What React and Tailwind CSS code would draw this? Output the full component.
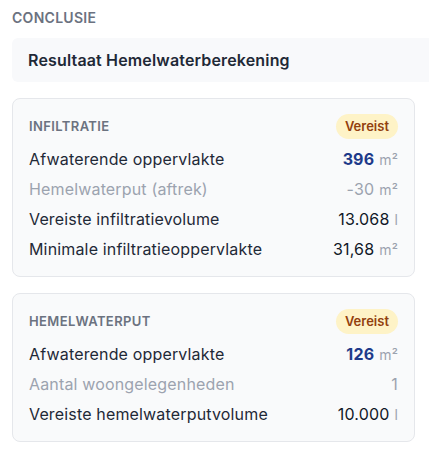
import React from "react";

function Badge() {
  return (
    <span className="inline-flex h-[25px] items-center rounded-full bg-[#fef3c7] px-[9px] text-[13px] font-semibold text-[#92400e]">
      Vereist
    </span>
  );
}

function Row({ label, value, unit, muted, strong }) {
  return (
    <div className="flex h-[30px] items-center justify-between leading-[30px] tracking-[0.01em]">
      <span className={muted ? "text-[#9ca3af]" : "text-[#1f2937]"}>{label}</span>
      <span className="whitespace-nowrap">
        <span
          className={
            strong
              ? "font-bold text-[#1e3a8a]"
              : muted
              ? "text-[#9ca3af]"
              : "text-[#111827]"
          }
        >
          {value}
        </span>
        {unit && <span className="ml-[5px] text-[14px] text-[#9ca3af]">{unit}</span>}
      </span>
    </div>
  );
}

function Card({ title, rows }) {
  return (
    <div className="rounded-lg border border-[#e5e7eb] bg-[#f9fafb] px-4 pt-[15px] pb-3">
      <div className="mb-[5px] flex items-center justify-between">
        <span className="text-[13px] font-semibold uppercase tracking-[0.03em] text-[#6b7280]">
          {title}
        </span>
        <Badge />
      </div>
      {rows.map((r, i) => (
        <Row key={i} {...r} />
      ))}
    </div>
  );
}

export default function App() {
  return (
    <div
      className="min-h-[450px] bg-white px-3 pt-2 text-[16px]"
      style={{ fontFamily: "Inter, 'Noto Sans', sans-serif" }}
    >
      <div className="text-[14px] font-semibold uppercase leading-[20px] tracking-[0.02em] text-[#6b7280]">
        Conclusie
      </div>
      <div className="mt-[10px] flex h-[44px] w-[430px] items-center rounded-md bg-[#f8f9fb] px-4 text-[16px] font-semibold tracking-[0.01em] text-[#1f2937]">
        Resultaat Hemelwaterberekening
      </div>
      <div className="mt-4 flex w-[403px] flex-col gap-4">
        <Card
          title="Infiltratie"
          rows={[
            { label: "Afwaterende oppervlakte", value: "396", unit: "m²", strong: true },
            { label: "Hemelwaterput (aftrek)", value: "-30", unit: "m²", muted: true },
            { label: "Vereiste infiltratievolume", value: "13.068", unit: "l" },
            { label: "Minimale infiltratieoppervlakte", value: "31,68", unit: "m²" },
          ]}
        />
        <Card
          title="Hemelwaterput"
          rows={[
            { label: "Afwaterende oppervlakte", value: "126", unit: "m²", strong: true },
            { label: "Aantal woongelegenheden", value: "1", muted: true },
            { label: "Vereiste hemelwaterputvolume", value: "10.000", unit: "l" },
          ]}
        />
      </div>
    </div>
  );
}
